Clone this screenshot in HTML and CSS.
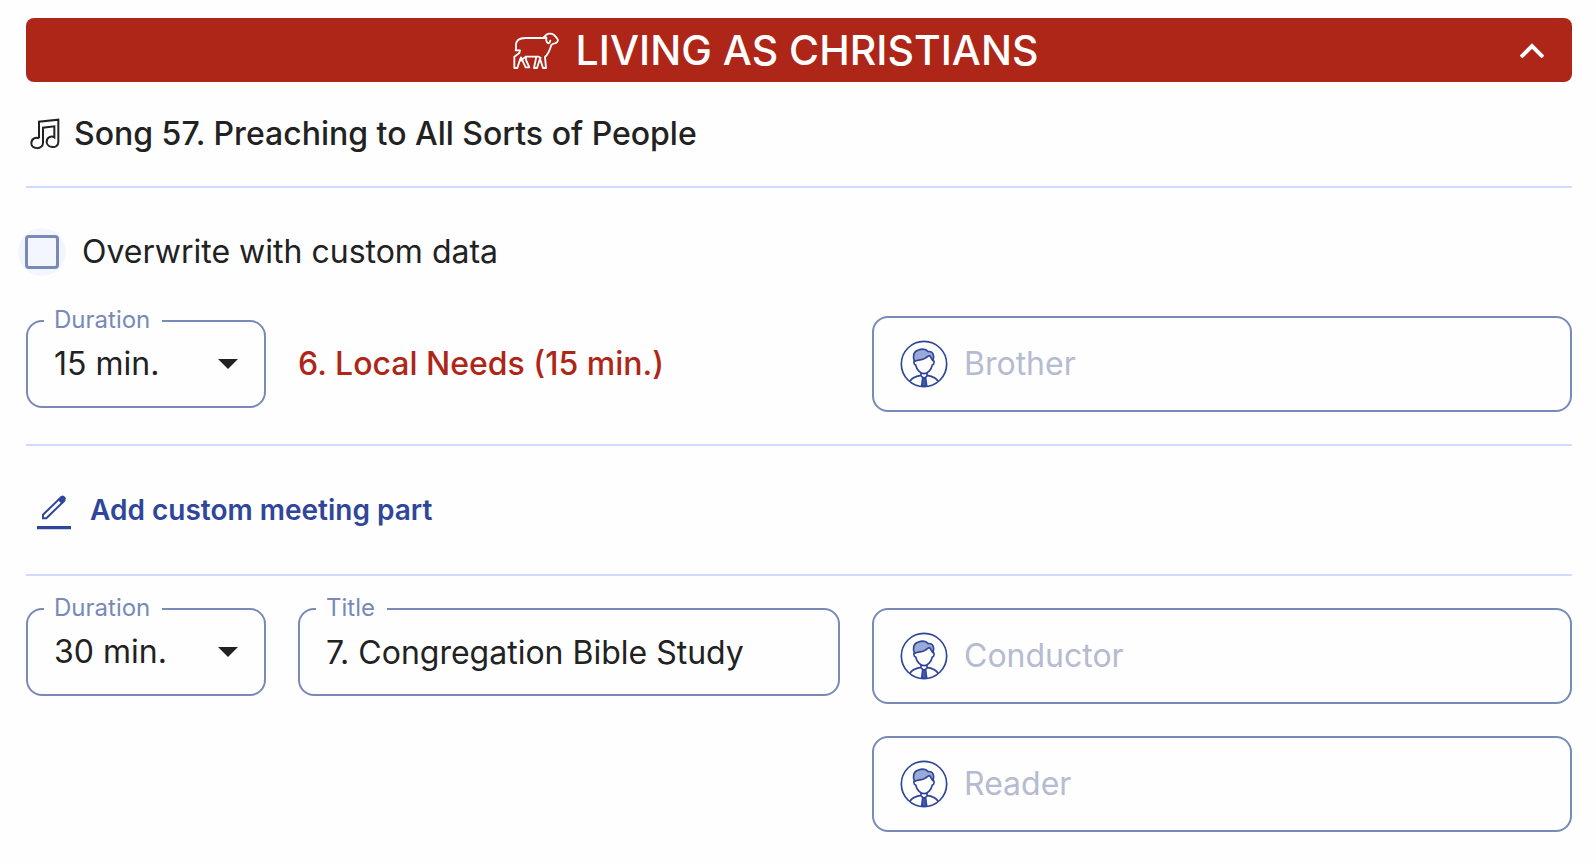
FILE: index.html
```html
<!DOCTYPE html>
<html lang="en">
<head>
<meta charset="utf-8">
<meta name="viewport" content="width=device-width, initial-scale=1">
<title>Living as Christians</title>
<link rel="stylesheet" href="styles.css">
</head>
<body>
<svg class="symbols" aria-hidden="true">
  <symbol id="person" viewBox="0 0 144 144">
    <g fill="none" stroke="#2f4699" stroke-width="5">
      <circle cx="72" cy="72" r="68"/>
      <path d="M30 124c4-10 16-15 33-18l0-8M81 98v8c17 3 29 8 33 18M62 107l10 8 11-8"/>
      <path fill="#3f5bb5" d="M68 114h9l3 24H65z"/>
      <path d="M46 60c-7 2-5 13 1 15 3 14 14 26 25 26s22-12 25-26c6-2 8-13 1-15"/>
      <path fill="#9aaad8" d="M44 64c-7-14-4-30 11-34 14-5 25-1 30 5 14-3 19 12 14 27-4-2-5-10-10-15-6 0-8 5-14 8-9 6-20 3-31 9z"/>
    </g>
  </symbol>
  <symbol id="arrow" viewBox="0 0 20 10"><path fill="#222" d="M0 0h20L10 10z"/></symbol>
</svg>
<main class="page">
  <header class="banner">
    <h1 class="banner-title">
      <svg class="lamb" viewBox="0 0 144 120" aria-hidden="true">
        <path fill="none" stroke="#fff" stroke-width="5.5" stroke-linejoin="round" stroke-linecap="round" d="M98 24H40C20 24 12 32 12 46v10l-1 5h13l-2 8-15 11v34h9l7-22 4-10 14 30h11L42 90V80h31l-7 34h9l9-28 9 28h9l-3-33c10-9 15-22 19-36 4-3 6-5 10-5 6-1 9-2 10-10-2-6-8-11-13-16-9-6-21-3-26 4-2 4-5 6-7 6M103 22c-1 9 0 15 5 18 4 0 6-3 7-8M27 92l14-12M86 84l-6-4h-8"/>
      </svg>
      <span>LIVING AS CHRISTIANS</span>
    </h1>
    <button class="toggle" type="button" aria-label="Collapse section" aria-expanded="true">
      <svg class="chevron" viewBox="0 0 24 16" aria-hidden="true"><path fill="none" stroke="#fff" stroke-width="4" d="M1 15 12 4l11 11"/></svg>
    </button>
  </header>

  <div class="song">
    <svg class="note" viewBox="0 0 90 96" aria-hidden="true">
      <path fill="none" stroke="#222" stroke-width="6" d="M27 61V11L85 5v67c0 22-35 18-35 0 0-14 14-20 23-14V25L39 29v45c0 23-35 20-35 2 0-14 14-20 23-15"/>
    </svg>
    <h2 class="song-title">Song 57. Preaching to All Sorts of People</h2>
  </div>

  <section class="section">
    <label class="overwrite">
      <input class="checkbox" type="checkbox">
      <span>Overwrite with custom data</span>
    </label>
    <div class="part part-centered">
      <div class="details">
        <fieldset class="field">
          <legend class="legend"><label for="duration-6">Duration</label></legend>
          <div class="select-wrap">
            <select class="control" id="duration-6"><option>15 min.</option></select>
            <svg class="arrow" aria-hidden="true"><use href="#arrow"/></svg>
          </div>
        </fieldset>
        <p class="part-title">6. Local Needs (15 min.)</p>
      </div>
      <label class="assignee">
        <svg class="person" aria-hidden="true"><use href="#person"/></svg>
        <input class="person-input" type="text" placeholder="Brother" aria-label="Brother">
      </label>
    </div>
  </section>

  <div class="section">
    <button class="add" type="button">
      <svg class="pencil" viewBox="0 0 102 105" aria-hidden="true">
        <path fill="#2f4699" d="M0 93h102v10H0z"/>
        <path fill="none" stroke="#2f4699" stroke-width="6" d="M18 70V59L72 7l10 10-54 53z"/>
        <path fill="#2f4699" d="M62 14 73 3q4-3 8 0l4 4q4 4 0 8L74 26z"/>
      </svg>
      <span>Add custom meeting part</span>
    </button>
  </div>

  <section class="section">
    <div class="part part-last">
      <div class="details">
        <fieldset class="field">
          <legend class="legend"><label for="duration-7">Duration</label></legend>
          <div class="select-wrap">
            <select class="control" id="duration-7"><option>30 min.</option></select>
            <svg class="arrow" aria-hidden="true"><use href="#arrow"/></svg>
          </div>
        </fieldset>
        <fieldset class="field">
          <legend class="legend"><label for="title-7">Title</label></legend>
          <input class="control" id="title-7" type="text" value="7. Congregation Bible Study">
        </fieldset>
      </div>
      <div class="people">
        <label class="assignee">
          <svg class="person" aria-hidden="true"><use href="#person"/></svg>
          <input class="person-input" type="text" placeholder="Conductor" aria-label="Conductor">
        </label>
        <label class="assignee">
          <svg class="person" aria-hidden="true"><use href="#person"/></svg>
          <input class="person-input" type="text" placeholder="Reader" aria-label="Reader">
        </label>
      </div>
    </div>
  </section>
</main>
</body>
</html>
```

FILE: styles.css
```css
*, *::before { box-sizing: border-box; }

body {
  margin: 0;
  background: #fefefe;
  color: #222;
  font: 400 32px/40px Inter, "Liberation Sans", sans-serif;
}

h1, h2, p { margin: 0; }

button, input, select { font: inherit; color: inherit; }

.symbols { display: none; }

.page { padding: 18px 24px 32px 26px; }

.banner {
  display: flex;
  align-items: center;
  height: 64px;
  padding: 0 16px;
  border-radius: 8px;
  background: #ae2618;
  color: #fff;
}

.banner-title {
  flex: 1;
  display: flex;
  align-items: center;
  justify-content: center;
  gap: 16px;
  font-size: 41px;
  font-weight: 550;
}

.lamb { width: 48px; height: 40px; }

.toggle {
  display: flex;
  align-items: center;
  justify-content: center;
  width: 48px;
  height: 48px;
  padding: 0;
  border: 0;
  background: none;
}

.chevron { width: 24px; height: 16px; }

.song {
  display: flex;
  align-items: center;
  gap: 14px;
  height: 104px;
  padding-left: 4px;
}

.note { width: 30px; height: 32px; }

.song-title { font-size: 32px; font-weight: 500; }

.section { border-top: 2px solid #d0dcfd; }

.overwrite {
  display: flex;
  align-items: center;
  gap: 16px;
  height: 128px;
  margin-left: -8px;
}

.checkbox {
  appearance: none;
  display: grid;
  place-items: center;
  width: 48px;
  height: 48px;
  margin: 0;
  border-radius: 50%;
  background: #f3f7fd;
}

.checkbox::before {
  content: "";
  width: 34px;
  height: 34px;
  border: 3px solid #778ab8;
  border-radius: 4px;
}

.checkbox:checked::before { background: #2f4699; }

.part {
  display: grid;
  grid-template-columns: 407fr 350fr;
  align-items: start;
  gap: 32px;
  padding-bottom: 32px;
}

.part-centered { align-items: center; }

.part-last { padding-top: 32px; padding-bottom: 0; }

.details {
  display: grid;
  grid-template-columns: 240px 1fr;
  gap: 32px;
  align-items: inherit;
}

.field {
  min-width: 0;
  margin: -12px 0 0;
  padding: 0 0 12px;
  border: 2px solid #778ab8;
  border-radius: 16px;
}

.legend {
  margin-left: 16px;
  padding: 0 12px 2px 10px;
  color: #778ab8;
  font-size: 24px;
  line-height: 24px;
}

.control {
  display: block;
  width: 100%;
  height: 60px;
  padding: 0 26px;
  border: 0;
  background: none;
  outline: none;
  appearance: none;
}

.select-wrap { display: grid; align-items: center; }

.select-wrap > * { grid-area: 1 / 1; }

.arrow {
  justify-self: end;
  width: 20px;
  height: 10px;
  margin-right: 26px;
  pointer-events: none;
}

.part-title { color: #ae2618; font-weight: 500; }

.people { display: grid; gap: 32px; }

.assignee {
  display: flex;
  align-items: center;
  gap: 16px;
  height: 96px;
  padding: 0 26px;
  border: 2px solid #778ab8;
  border-radius: 16px;
}

.person { flex: none; width: 48px; height: 48px; }

.person-input {
  flex: 1;
  min-width: 0;
  padding: 0;
  border: 0;
  background: none;
  outline: none;
}

.person-input::placeholder { color: #b5bbd0; opacity: 1; }

.add {
  display: flex;
  align-items: center;
  gap: 19px;
  height: 128px;
  padding: 0 11px;
  border: 0;
  background: none;
  color: #2f4699;
  font-size: 28px;
  font-weight: 600;
}

.pencil { width: 34px; height: 35px; margin-top: 4px; }
```
